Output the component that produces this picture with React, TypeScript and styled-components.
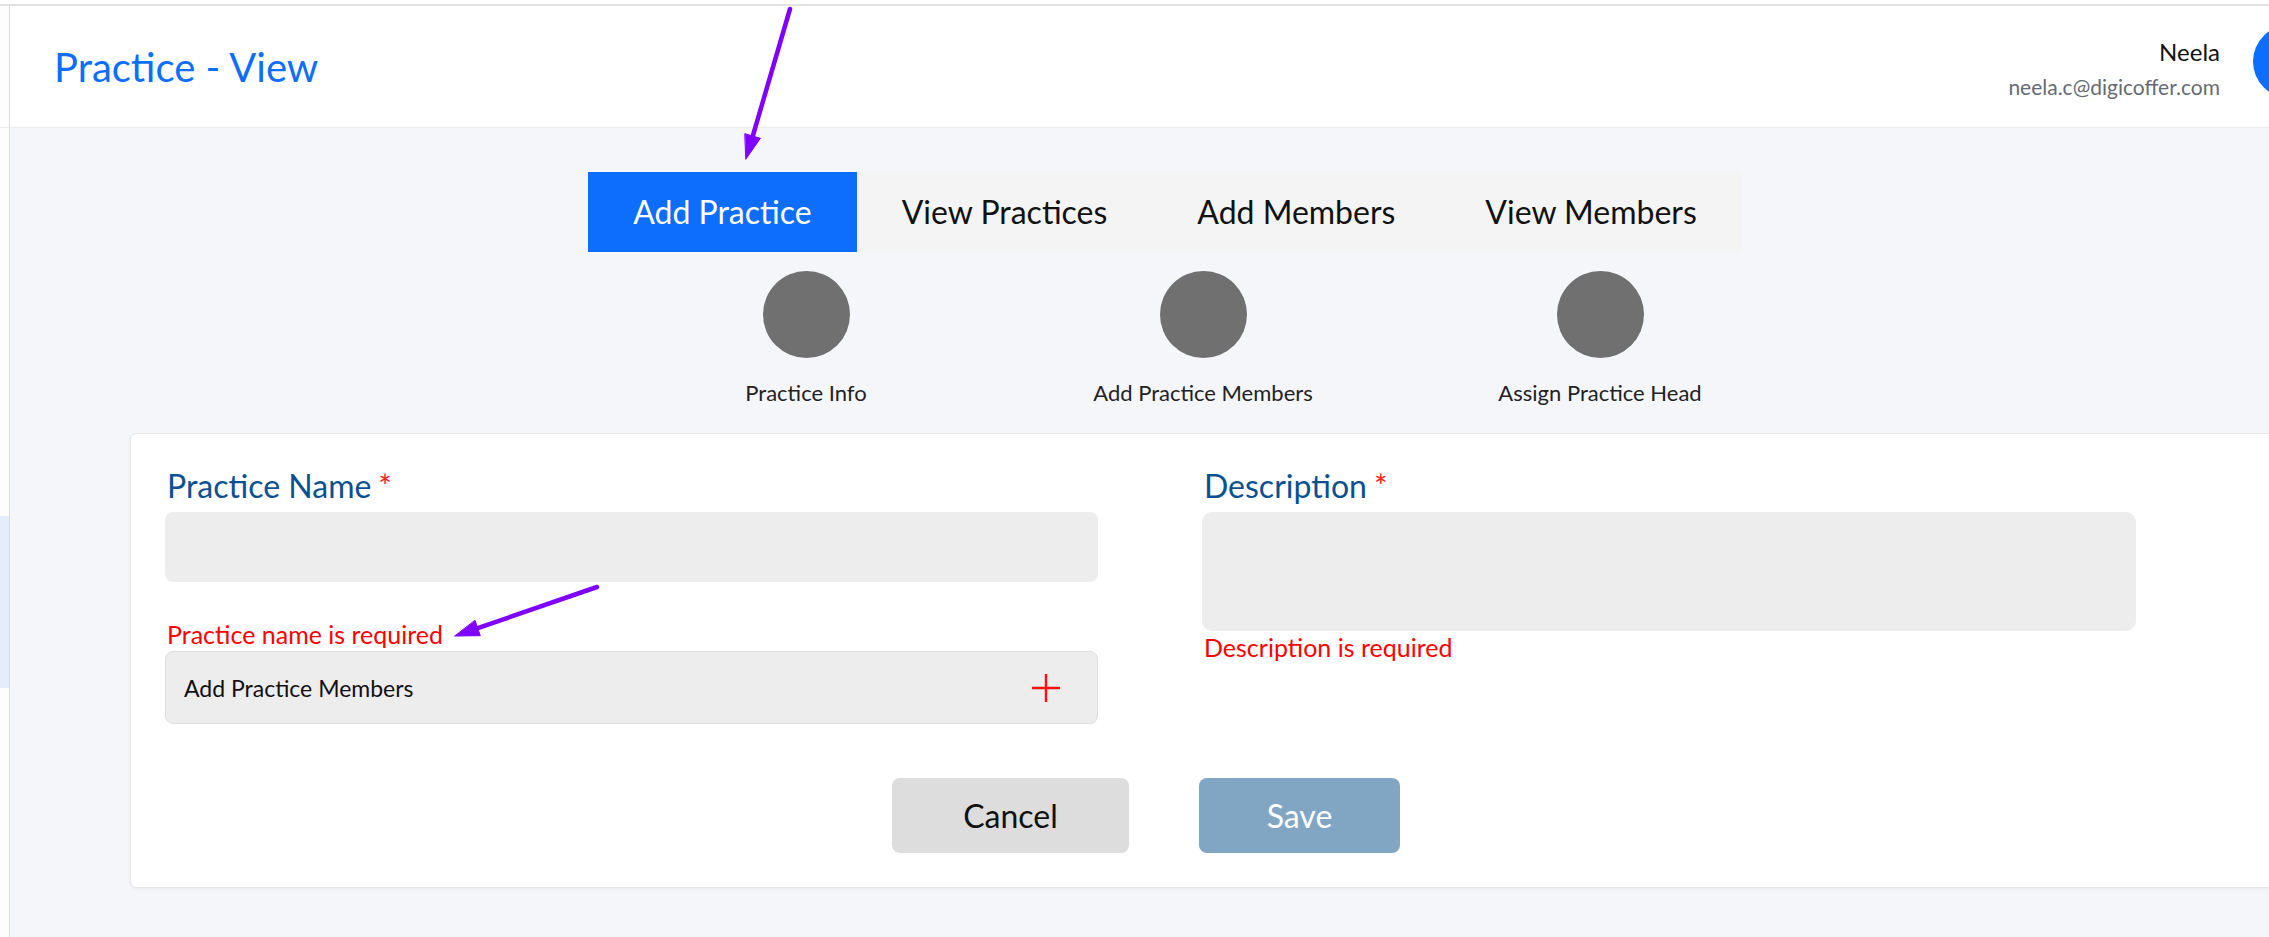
import React, { useState } from 'react';
import styled, { createGlobalStyle } from 'styled-components';

const GlobalStyle = createGlobalStyle`
  html, body {
    margin: 0;
    padding: 0;
    overflow: hidden;
    background: #f5f6fa;
    font-family: Lato, "Open Sans", sans-serif;
  }
  * { box-sizing: border-box; }
`;

const Page = styled.div`
  position: relative;
  width: 2326px;
  min-height: 100vh;
  display: flex;
  flex-direction: column;
  background: #f5f6fa;
`;

const TopEdge = styled.div`
  height: 6px;
  background: #fff;
  border-bottom: 2px solid #e2e2e2;
`;

const Layout = styled.div`
  flex: 1;
  display: flex;
`;

const Sidebar = styled.aside`
  width: 10px;
  background: #fdfdfd;
  border-right: 1px solid #dcdcdc;
  display: flex;
  flex-direction: column;
`;

const SidebarTop = styled.div`
  height: 122px;
  border-bottom: 1px solid #ececec;
`;

const SidebarActive = styled.div`
  margin-top: 388px;
  height: 172px;
  background: #e3eefd;
`;

const Content = styled.div`
  flex: 1;
  display: flex;
  flex-direction: column;
`;

const Header = styled.header`
  height: 122px;
  background: #fff;
  border-bottom: 1px solid #ececec;
  display: flex;
  align-items: center;
  justify-content: space-between;
  padding-left: 44px;
`;

const PageTitle = styled.h1`
  margin: 0;
  font-size: 40px;
  line-height: 48px;
  font-weight: 400;
  color: #0d6efd;
`;

const UserBlock = styled.div`
  display: flex;
  align-items: center;
  gap: 33px;
`;

const UserText = styled.div`
  display: flex;
  flex-direction: column;
  align-items: flex-end;
  margin-top: 2px;
`;

const UserName = styled.span`
  font-size: 24px;
  line-height: 29px;
  color: #111;
`;

const UserEmail = styled.span`
  margin-top: 8px;
  font-size: 21px;
  line-height: 25px;
  color: #666b73;
`;

const Avatar = styled.div`
  width: 73px;
  height: 73px;
  border-radius: 50%;
  background: #0d6efd;
  margin-bottom: 11px;
`;

const Main = styled.main`
  flex: 1;
  padding-top: 44px;
  display: flex;
  flex-direction: column;
`;

const TabRow = styled.div`
  display: flex;
  justify-content: center;
  padding-right: 6px;
`;

const Tabs = styled.div`
  display: flex;
  background: #f4f4f4;
`;

const Tab = styled.button<{ $active?: boolean }>`
  height: 80px;
  padding: 0 45px;
  border: none;
  font-family: inherit;
  font-size: 32px;
  line-height: 80px;
  background: ${p => (p.$active ? '#0d6efd' : 'transparent')};
  color: ${p => (p.$active ? '#fff' : '#111')};
  cursor: pointer;
`;

const StepRow = styled.div`
  display: flex;
  justify-content: center;
  padding-left: 70px;
  margin-top: 19px;
`;

const Step = styled.div`
  width: 397px;
  display: flex;
  flex-direction: column;
  align-items: center;
`;

const StepDot = styled.div`
  width: 87px;
  height: 87px;
  border-radius: 50%;
  background: #707070;
`;

const StepLabel = styled.span`
  margin-top: 22px;
  font-size: 22px;
  line-height: 26px;
  color: #222;
`;

const Card = styled.section`
  margin: 27px 0 0 120px;
  background: #fff;
  border: 1px solid #e6e6e6;
  border-radius: 6px;
  box-shadow: 0 1px 3px rgba(0, 0, 0, 0.04);
  padding: 34px 35px 34px 34px;
`;

const FormBody = styled.div`
  width: 1972px;
`;

const FieldGrid = styled.div`
  display: grid;
  grid-template-columns: 933px 934px;
  column-gap: 104px;
  align-items: start;
`;

const Field = styled.div`
  display: flex;
  flex-direction: column;
`;

const Label = styled.label`
  font-size: 32px;
  line-height: 36px;
  color: #0b5191;
  margin-left: 2px;
`;

const Star = styled.span`
  color: #ff2020;
  margin-left: 7px;
`;

const TextInput = styled.input`
  margin-top: 8px;
  height: 70px;
  border: none;
  border-radius: 8px;
  background: #ededed;
  font-family: inherit;
  font-size: 22px;
  padding: 0 18px;
  outline: none;
`;

const TextArea = styled.textarea`
  margin-top: 8px;
  height: 119px;
  border: none;
  border-radius: 10px;
  background: #ededed;
  font-family: inherit;
  font-size: 22px;
  padding: 14px 18px;
  resize: none;
  outline: none;
`;

const ErrorText = styled.span<{ $gap: number }>`
  margin-top: ${p => p.$gap}px;
  margin-left: 2px;
  font-size: 25px;
  line-height: 26px;
  color: #ff0000;
`;

const MembersBox = styled.div`
  margin-top: 4px;
  height: 73px;
  border: 1px solid #dedede;
  border-radius: 8px;
  background: #ededed;
  display: flex;
  align-items: center;
  justify-content: space-between;
  padding: 0 37px 0 18px;
  font-size: 23px;
  color: #111;
`;

const PlusButton = styled.button`
  border: none;
  background: none;
  padding: 0;
  display: flex;
  cursor: pointer;
`;

const ButtonRow = styled.div`
  margin-top: 54px;
  display: flex;
  justify-content: center;
  gap: 70px;
  padding-right: 10px;
`;

const ActionButton = styled.button<{ $primary?: boolean; $w: number }>`
  width: ${p => p.$w}px;
  height: 75px;
  border: none;
  border-radius: 8px;
  font-family: inherit;
  font-size: 32px;
  background: ${p => (p.$primary ? '#80a6c4' : '#dddddd')};
  color: ${p => (p.$primary ? '#fff' : '#111')};
  cursor: pointer;
`;

const Annotations = styled.svg`
  position: absolute;
  top: 0;
  left: 0;
  pointer-events: none;
`;

const tabs = ['Add Practice', 'View Practices', 'Add Members', 'View Members'];
const steps = ['Practice Info', 'Add Practice Members', 'Assign Practice Head'];

const App = () => {
  const [activeTab, setActiveTab] = useState(0);
  const [name, setName] = useState('');
  const [description, setDescription] = useState('');

  return (
    <>
      <GlobalStyle />
      <Page>
        <TopEdge />
        <Layout>
          <Sidebar>
            <SidebarTop />
            <SidebarActive />
          </Sidebar>
          <Content>
            <Header>
              <PageTitle>Practice - View</PageTitle>
              <UserBlock>
                <UserText>
                  <UserName>Neela</UserName>
                  <UserEmail>neela.c@digicoffer.com</UserEmail>
                </UserText>
                <Avatar />
              </UserBlock>
            </Header>
            <Main>
              <TabRow>
                <Tabs>
                  {tabs.map((t, i) => (
                    <Tab key={t} $active={i === activeTab} onClick={() => setActiveTab(i)}>
                      {t}
                    </Tab>
                  ))}
                </Tabs>
              </TabRow>
              <StepRow>
                {steps.map(s => (
                  <Step key={s}>
                    <StepDot />
                    <StepLabel>{s}</StepLabel>
                  </Step>
                ))}
              </StepRow>
              <Card>
                <FormBody>
                  <FieldGrid>
                    <Field>
                      <Label>
                        Practice Name<Star>*</Star>
                      </Label>
                      <TextInput value={name} onChange={e => setName(e.target.value)} />
                      <ErrorText $gap={39}>Practice name is required</ErrorText>
                      <MembersBox>
                        Add Practice Members
                        <PlusButton>
                          <svg width="28" height="28" viewBox="0 0 28 28">
                            <path d="M14 0V28M0 14H28" stroke="#ff1010" strokeWidth="2.4" fill="none" />
                          </svg>
                        </PlusButton>
                      </MembersBox>
                    </Field>
                    <Field>
                      <Label>
                        Description<Star>*</Star>
                      </Label>
                      <TextArea value={description} onChange={e => setDescription(e.target.value)} />
                      <ErrorText $gap={3}>Description is required</ErrorText>
                    </Field>
                  </FieldGrid>
                  <ButtonRow>
                    <ActionButton $w={237}>Cancel</ActionButton>
                    <ActionButton $w={201} $primary>
                      Save
                    </ActionButton>
                  </ButtonRow>
                </FormBody>
              </Card>
            </Main>
          </Content>
        </Layout>
        <Annotations width="2326" height="937">
          <g stroke="#7f00ff" strokeWidth="4.5" strokeLinecap="round" fill="#7f00ff">
            <line x1="790" y1="9" x2="752.8" y2="136" />
            <polygon points="746,159 760.4,138.3 745.1,133.8" strokeWidth="1" />
            <line x1="597" y1="587" x2="477.7" y2="628.2" />
            <polygon points="455,636 480.3,635.7 475.1,620.6" strokeWidth="1" />
          </g>
        </Annotations>
      </Page>
    </>
  );
};

export default App;
